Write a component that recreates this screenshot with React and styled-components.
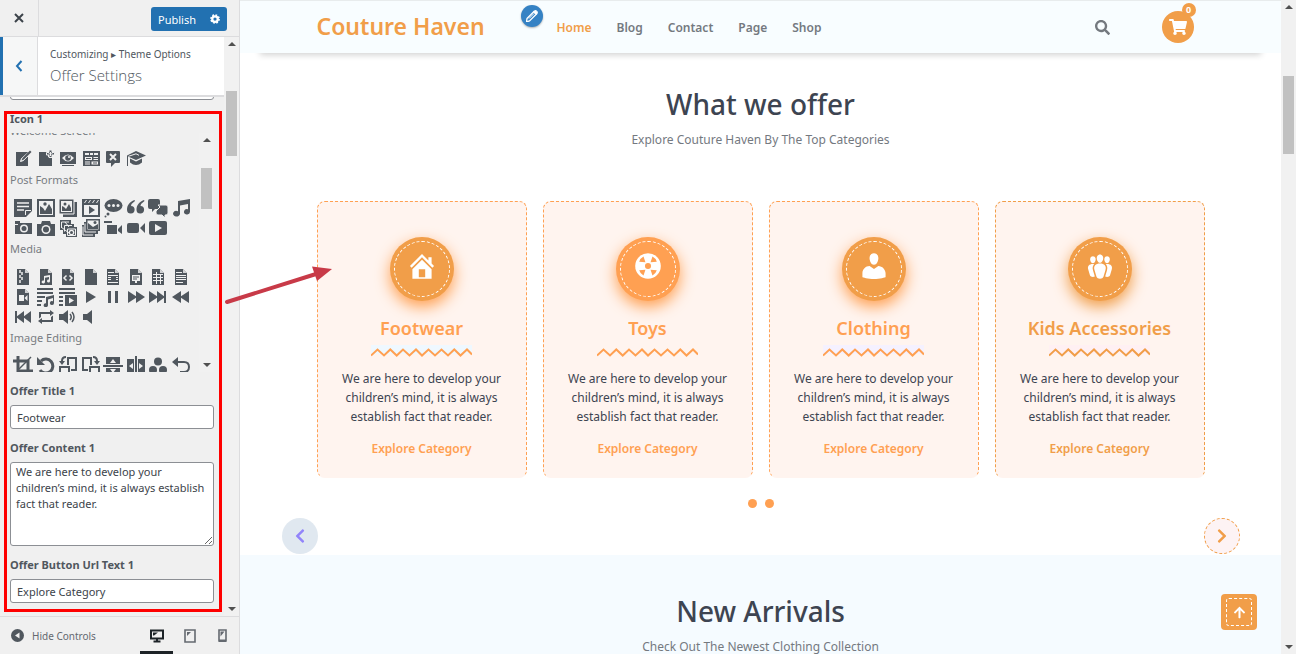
import styled, { createGlobalStyle } from 'styled-components';
import { FaSearch, FaShoppingCart, FaChevronLeft, FaChevronRight, FaArrowUp } from 'react-icons/fa';

const cut = '#f0f0f0';
const file = 'M4 2h8l4 4v12H4z';
const fold = <path d="M12 2v4h4z" fill={cut} opacity="0.8" />;

const icons = {
  write: (
    <>
      <path d="M3 3h12v14H3z" />
      <path d="M17.500 1.500 8.500 9.500 7.500 12.500 10.500 11.500 19 3z" fill={cut} stroke={cut} strokeWidth="1" />
      <path d="M17 1.500 18.500 3 11 10.500 8.500 11.500 9.500 9z" />
    </>
  ),
  addPage: (
    <>
      <path d="M3 3h9v5h4v9H3z" />
      <path d="M13 1h3v2.500h2.500V6H16v2.500h-3V6h-2.500V3.500H13z" stroke={cut} />
      <path d="M14.500 3v4M12.500 4.800h4" stroke={cut} strokeWidth="1" />
    </>
  ),
  viewSite: (
    <>
      <path d="M2 3h16v12H2zM4 16h12v1H4z" />
      <path d="M4 9q6-7 12 0-6 7-12 0z" fill={cut} />
      <circle cx="10" cy="9" r="2.800" />
      <circle cx="11" cy="8" r="1" fill={cut} />
    </>
  ),
  widgets: (
    <>
      <path d="M2 2h17v15H2z" />
      <path d="M4 4h4v2H4zM9 4h3v2H9zM13 4h4v2h-4zM4 8h7v3H4zM12.500 8H17v1h-4.500zM12.500 10H17v1h-4.500zM4 12.500h5v1H4zM4 14.500h5v1H4zM10.500 12.500H17v3h-6.500z" fill={cut} />
      <path d="M5 9h5v1H5zM12 13.500h4v1h-4z" />
    </>
  ),
  comments: (
    <>
      <path d="M4 2h12a1 1 0 0 1 1 1v10a1 1 0 0 1-1 1h-4l-4 4v-4H4a1 1 0 0 1-1-1V3a1 1 0 0 1 1-1z" />
      <path d="M7 5l6 6M13 5l-6 6" stroke={cut} strokeWidth="2" />
    </>
  ),
  learn: (
    <>
      <path d="M10 2l10 4.500-10 4.500L2 7.500V17H1V6.500z" />
      <path d="M4 9.500l6 3 6-3v4q-6 5-12 0z" />
      <path d="M2.500 7.300 10 4.800l3 1.500" stroke={cut} fill="none" />
    </>
  ),
  aside: (
    <>
      <path d="M1 1h18v12l-6 6H1z" />
      <path d="M4 5h12M4 8.500h12M4 12h7" stroke={cut} strokeWidth="1.500" />
      <path d="M12.500 17v-4.500H18" stroke={cut} fill="none" />
    </>
  ),
  image: (
    <>
      <path d="M1 1h18v18H1z" />
      <path d="M3 3h14v14H3z" fill={cut} />
      <path d="M4 16V8l3 2 2 3 4-7 3 5v5z" />
      <circle cx="9" cy="6" r="1.700" />
    </>
  ),
  gallery: (
    <>
      <path d="M5 4h14v15H5z" />
      <path d="M1 1h15v15H1z" stroke={cut} />
      <path d="M3 3h11v11H3z" fill={cut} />
      <path d="M4 13V8l2 1 2 2 3-5 2 4v3z" />
      <circle cx="7" cy="6" r="1.500" />
    </>
  ),
  video: (
    <>
      <path d="M1 1h18v18H1z" />
      <path d="M3 7h14v10H3zM3 5l2-3h1L4 5zM7 5l2-3h1L8 5zM11 5l2-3h1l-2 3zM15 5l2-3h1l-2 3z" fill={cut} />
      <path d="M8 8l6 4-6 4z" />
    </>
  ),
  status: (
    <>
      <ellipse cx="10.500" cy="7.500" rx="9" ry="6.500" />
      <circle cx="5" cy="16" r="1.500" />
      <circle cx="2.500" cy="18.500" r="1" />
      <g fill={cut}>
        <circle cx="6" cy="7.500" r="1.500" />
        <circle cx="10.500" cy="7.500" r="1.500" />
        <circle cx="15" cy="7.500" r="1.500" />
      </g>
    </>
  ),
  quote: (
    <>
      <path d="M8.500 2C3.500 4 1 7 1 12a3.800 3.800 0 1 0 4-4q.2-2.500 4-5z" />
      <path d="M18 2c-5 2-7.500 5-7.500 10a3.800 3.800 0 1 0 4-4q.2-2.500 4-5z" />
    </>
  ),
  chat: (
    <>
      <path d="M2 1h8q2 0 2 2v6q0 2-2 2H7l-3 3v-3H2q-2 0-2-2V3q0-2 2-2z" />
      <path d="M10 7h8q2 0 2 2v6q0 2-2 2h-1v3l-3-3h-4q-2 0-2-2v-2l4-4z" stroke={cut} />
    </>
  ),
  audio: <path d="M7 3l12-2v13a3 2.700 0 1 1-2-2.800V6L9 7.500V16a3.500 2.800 0 1 1-2-2.800z" />,
  cameraSmall: (
    <>
      <path d="M2 3h5v2h12v11H2z" />
      <circle cx="11" cy="10.500" r="4" fill={cut} />
      <circle cx="11" cy="10.500" r="2.500" />
      <path d="M2 6h3v1H2z" fill={cut} />
    </>
  ),
  camera: (
    <>
      <path d="M6 3h8l1 3h4v12H1V6h4z" />
      <circle cx="10" cy="11.500" r="4.500" fill={cut} />
      <circle cx="10" cy="11.500" r="3" />
    </>
  ),
  imagesAlt: (
    <>
      <path d="M2 2h11v4h3v3h3v10H8v-3H5v-4H2z" />
      <path d="M3.500 4H11M3.500 4v6M6.500 7.500H14M6.500 7.500v6M9.500 11h8v6.500h-8z" stroke={cut} fill="none" />
      <path d="m7 4 4 5M3 9l8 6" stroke={cut} />
      <circle cx="13.500" cy="14.500" r="2.800" fill={cut} />
      <circle cx="13.500" cy="14.500" r="1.500" />
    </>
  ),
  imagesAlt2: (
    <>
      <path d="M5 1h14v12h-2v3h-3v3H1V7h2V4h2z" />
      <path d="M4 5.500V14h11M2 8.500V17h10" stroke={cut} fill="none" />
      <path d="M6.500 2.500h11v9h-11z" fill={cut} />
      <path d="M7 11V5l5 4 5-3v5z" />
      <circle cx="14" cy="4.500" r="1.500" />
    </>
  ),
  videoAlt: <path d="M1 3h8v2H1zM4 7h10v9H4zM15 11l4-4v9l-4-3z" />,
  videoAlt2: <path d="M3 5h8q2 0 2 2v6q0 2-2 2H3q-2 0-2-2V7q0-2 2-2zM14 10l5-5v10z" />,
  videoAlt3: (
    <>
      <rect x="1" y="3" width="18" height="14" rx="2" />
      <path d="M7 6l7 4-7 4z" fill={cut} />
    </>
  ),
  archive: (
    <>
      <path d={file} />
      {fold}
      <path d="M7 3v3M9 5v3M7 8v3M9 10v3M7 13v3" stroke={cut} strokeWidth="1.500" />
    </>
  ),
  fileAudio: (
    <>
      <path d={file} />
      {fold}
      <path d="M8 9l6-1v6a1.500 1.500 0 1 1-1-1.400V10l-4 .7V15a1.700 1.500 0 1 1-1-1.400z" fill={cut} />
    </>
  ),
  code: (
    <>
      <path d={file} />
      {fold}
      <path d="M8.500 8.500 6 11l2.500 2.500M11.500 8.500 14 11l-2.500 2.500" stroke={cut} strokeWidth="1.500" fill="none" />
    </>
  ),
  file: (
    <>
      <path d={file} />
      {fold}
    </>
  ),
  fileDoc: (
    <>
      <path d={file} />
      {fold}
      <path d="M5 5.500h6M5 8.500h10M5 10.500h3M5 12.500h3M5 15.500h10M13 10.500h2M13 12.500h2" stroke={cut} />
    </>
  ),
  fileSlides: (
    <>
      <path d={file} />
      {fold}
      <path d="M6 8h8v6h-3v2H9v-2H6z" fill={cut} />
      <path d="M7 10h6M7 12h4" stroke="#50575e" />
    </>
  ),
  sheet: (
    <>
      <path d={file} />
      {fold}
      <path d="M5 7.500h10M5 10.500h10M5 13.500h10M8.500 5v12M12.500 7v10" stroke={cut} />
    </>
  ),
  fileText: (
    <>
      <path d={file} />
      {fold}
      <path d="M5 5.500h6M5 8.500h10M5 10.500h10M5 12.500h10M5 15.500h7" stroke={cut} />
    </>
  ),
  fileVideo: (
    <>
      <path d={file} />
      {fold}
      <path d="M6 8h5v6H6zM11.500 11l3-3v6z" fill={cut} />
    </>
  ),
  playlistAudio: <path d="M1 1h16v2H1zM1 5h16v2H1zM1 9h8v2H1zM1 13h5v2H1zM1 17h4v2H1zM10 10l8-2v8a2 2 0 1 1-1-1.700V11l-5 1.500V18a2.200 2 0 1 1-2-1.800z" />,
  playlistVideo: (
    <>
      <path d="M1 1h16v2H1zM1 5h16v2H1zM1 9h4v2H1zM1 13h4v2H1zM1 17h4v2H1zM7 8h12v11H7z" />
      <path d="M11 10.500l5 3-5 3z" fill={cut} />
    </>
  ),
  play: <path d="M5 4l10 6-10 6V4z" />,
  pause: <path d="M5 16V4h3v12H5zm7-12h3v12h-3V4z" />,
  forward: <path d="M2 16V4l8 5.200V4l9 6-9 6v-5.200z" />,
  skipForward: <path d="M1 16V4l8 5.200V4l7 5.200V4h2v12h-2v-5.200L9 16v-5.200z" />,
  back: <path d="M18 4v12l-8-5.200V16l-9-6 9-6v5.200z" />,
  skipBack: <path d="M18 4v12l-7-5.200V16l-7-5.200V16H2V4h2v5.200L11 4v5.200z" />,
  repeat: <path d="M5 7v3l-2 1.500V5h11V3l4 3.010L14 9V7H5zm10 6v-3l2-1.500V15H6v2l-4-3.010L6 11v2h9z" />,
  volumeOn: (
    <>
      <path d="M1 7h4l5-4v14l-5-4H1z" />
      <path d="M12 7q2.500 3 0 6M14 5q4 5 0 10" fill="none" stroke="currentColor" strokeWidth="1.500" />
    </>
  ),
  volumeOff: <path d="M2 7h4l5-4v14l-5-4H2V7z" />,
  crop: (
    <>
      <path d="M5 0v15h15M0 5h15v15" fill="none" stroke="currentColor" strokeWidth="3" />
      <path d="M18 1 6 13" stroke="currentColor" strokeWidth="1.500" />
    </>
  ),
  rotate: (
    <>
      <path d="M5 5a7 7 0 1 1-1 9" fill="none" stroke="currentColor" strokeWidth="3" />
      <path d="M1 1v8h8z" />
    </>
  ),
  rotateLeft: (
    <>
      <path d="M10 9V2h8v12h-5M2 11h9v8H2z" fill="none" stroke="currentColor" strokeWidth="2" />
      <path d="M8 0v2Q5 2 5 5h2l-3 4-3-4h2q0-5 5-5z" />
    </>
  ),
  rotateRight: (
    <>
      <path d="M10 9V2H2v12h5M9 11h9v8H9z" fill="none" stroke="currentColor" strokeWidth="2" />
      <path d="M12 0v2q3 0 3 3h-2l3 4 3-4h-2q0-5-5-5z" />
    </>
  ),
  flipVertical: (
    <>
      <path d="M3 1h14v7H3zM0 9h20v2H0zM3 12h14v7H3z" />
      <path d="M10 3l3 4H7zM10 17l3-4H7z" fill={cut} />
    </>
  ),
  flipHorizontal: (
    <>
      <path d="M1 3h7v14H1zM9 0h2v20H9zM12 3h7v14h-7z" />
      <path d="M3 10l4-3v6zM17 10l-4-3v6z" fill={cut} />
    </>
  ),
  filter: (
    <>
      <circle cx="10" cy="5.500" r="4" />
      <circle cx="5" cy="14" r="4" />
      <circle cx="15" cy="14" r="4" />
    </>
  ),
  undo: (
    <>
      <path d="M5 6h8q5 0 5 5t-5 5H9" fill="none" stroke="currentColor" strokeWidth="2" />
      <path d="M7 1v10L1 6z" />
    </>
  ),
};

const iconGroups = [
  { title: 'Welcome Screen', names: ['write', 'addPage', 'viewSite', 'widgets', 'comments', 'learn'] },
  {
    title: 'Post Formats',
    names: [
      'aside', 'image', 'gallery', 'video', 'status', 'quote', 'chat', 'audio',
      'cameraSmall', 'camera', 'imagesAlt', 'imagesAlt2', 'videoAlt', 'videoAlt2', 'videoAlt3',
    ],
  },
  {
    title: 'Media',
    names: [
      'archive', 'fileAudio', 'code', 'file', 'fileDoc', 'fileSlides', 'sheet', 'fileText',
      'fileVideo', 'playlistAudio', 'playlistVideo', 'play', 'pause', 'forward', 'skipForward', 'back',
      'skipBack', 'repeat', 'volumeOn', 'volumeOff',
    ],
  },
  {
    title: 'Image Editing',
    names: ['crop', 'rotate', 'rotateLeft', 'rotateRight', 'flipVertical', 'flipHorizontal', 'filter', 'undo'],
  },
];

const content = 'We are here to develop your children’s mind, it is always establish fact that reader.';

const offers = [
  {
    title: 'Footwear',
    color: '#f19e49',
    accent: '#ffa052',
    tint: '#eff8ff',
    icon: <path d="M16 8.500l1.530 1.530-1.060 1.060L10 4.600l-6.470 6.490-1.060-1.060L10 2.500l4 4v-2h2v4zm-6-2.460l6 5.990V18H4v-5.970zM12 17v-5H8v5h4z" />,
  },
  {
    title: 'Toys',
    color: '#ffa052',
    accent: '#ffa052',
    tint: '#fff4ef',
    icon: (
      <>
        <circle cx="10" cy="10" r="8" />
        <g fill="#ffa052">
          <path d="M8.400 7.600 4.500 7.300Q5.200 5 7.200 4zM11.600 7.600l3.900-.3Q14.800 5 12.800 4zM8.400 12.400l-3.900.3Q5.200 15 7.200 16zM11.600 12.400l3.900.3Q14.800 15 12.800 16z" />
          <circle cx="10" cy="10" r="1.900" />
        </g>
      </>
    ),
  },
  {
    title: 'Clothing',
    color: '#f19e49',
    accent: '#ffa052',
    tint: '#f5f1ff',
    icon: <path d="M10 9.250c-2.270 0-2.730-3.440-2.730-3.440C7 4.020 7.820 2 9.970 2c2.160 0 2.980 2.020 2.710 3.810 0 0-.41 3.440-2.680 3.440zm0 2.570L12.720 10c2.390 0 4.520 2.330 4.520 4.530v2.490s-3.650 1.130-7.240 1.130c-3.650 0-7.240-1.130-7.240-1.130v-2.490c0-2.250 1.940-4.480 4.470-4.480z" />,
  },
  {
    title: 'Kids Accessories',
    color: '#f19e49',
    accent: '#f19e49',
    tint: '#fff0f3',
    icon: <path d="M8.030 4.460c-.29 1.280.55 3.460 1.970 3.460 1.410 0 2.250-2.180 1.960-3.460-.22-.98-1.080-1.630-1.960-1.630-.89 0-1.740.65-1.970 1.630zm-4.130.9c-.25 1.080.47 2.930 1.670 2.930s1.920-1.850 1.670-2.930c-.19-.83-.92-1.390-1.670-1.390s-1.480.56-1.670 1.390zm8.860 0c-.25 1.080.47 2.930 1.660 2.930 1.200 0 1.920-1.850 1.670-2.930-.19-.83-.92-1.390-1.670-1.390-.74 0-1.470.56-1.660 1.390zm-.59 11.430l1.250-4.300C14.200 10 12.710 8.470 10 8.470c-2.720 0-4.210 1.530-3.440 4.020l1.260 4.300C8.050 17.510 9 18 10 18c.98 0 1.940-.49 2.170-1.210zm-6.100-7.630c-.49.67-.96 1.830-.42 3.590l1.120 3.790c-.34.2-.77.31-1.200.31-.85 0-1.650-.41-1.850-1.030l-1.070-3.650c-.65-2.110.61-3.400 2.920-3.400.27 0 .54.02.79.06-.1.1-.2.22-.29.33zm8.350-.39c2.310 0 3.580 1.290 2.920 3.400l-1.070 3.650c-.2.62-1 1.030-1.850 1.030-.43 0-.86-.11-1.200-.31l1.110-3.770c.55-1.780.08-2.940-.42-3.610-.08-.11-.18-.23-.28-.33.25-.04.51-.06.79-.06z" />,
  },
];

const navLinks = ['Home', 'Blog', 'Contact', 'Page', 'Shop'];

function IconPicker() {
  return (
    <Picker>
      <PickerList>
        {iconGroups.map((group) => (
          <div key={group.title}>
            <GroupTitle>{group.title}</GroupTitle>
            <IconGrid>
              {group.names.map((name) => (
                <IconButton key={name} type="button" aria-label={name}>
                  <svg width="20" height="20" viewBox="0 0 20 20" fill="currentColor">
                    {icons[name]}
                  </svg>
                </IconButton>
              ))}
            </IconGrid>
          </div>
        ))}
      </PickerList>
      <ScrollTrack>
        <Arrow />
        <Thumb $top={26} $height={41} />
        <Arrow $down />
      </ScrollTrack>
    </Picker>
  );
}

function Customizer() {
  return (
    <Sidebar>
      <SidebarHeader>
        <CloseButton type="button" aria-label="Close">
          <svg width="10" height="10" viewBox="0 0 10 10">
            <path d="M1 1l8 8M9 1l-8 8" stroke="currentColor" strokeWidth="2" />
          </svg>
        </CloseButton>
        <PublishGroup>
          <PublishButton type="button">Publish</PublishButton>
          <GearButton type="button" aria-label="Publish settings">
            <svg width="10" height="10" viewBox="0 0 20 20">
              <circle cx="10" cy="10" r="5.500" fill="none" stroke="currentColor" strokeWidth="4.500" />
              <circle cx="10" cy="10" r="8" fill="none" stroke="currentColor" strokeWidth="3.500" strokeDasharray="3.400 2.880" />
            </svg>
          </GearButton>
        </PublishGroup>
      </SidebarHeader>
      <SidebarBody>
        <Panel>
          <PanelTitle>
            <BackButton type="button" aria-label="Back">
              <svg width="8" height="12" viewBox="0 0 8 12">
                <path d="M6.500 1 2 6l4.500 5" fill="none" stroke="currentColor" strokeWidth="2" />
              </svg>
            </BackButton>
            <PanelHeading>
              <Crumb>Customizing ▸ Theme Options</Crumb>
              <PanelName>Offer Settings</PanelName>
            </PanelHeading>
          </PanelTitle>
          <Fields>
            <ScrolledField>
              <TextInput aria-label="Offer Url" />
            </ScrolledField>
            <Field>
              <Label as="span">Icon 1</Label>
              <IconPicker />
            </Field>
            <Field>
              <Label htmlFor="offer-title">Offer Title 1</Label>
              <TextInput id="offer-title" defaultValue="Footwear" />
            </Field>
            <Field>
              <Label htmlFor="offer-content">Offer Content 1</Label>
              <TextArea id="offer-content" defaultValue={content} />
            </Field>
            <Field>
              <Label htmlFor="offer-button">Offer Button Url Text 1</Label>
              <TextInput id="offer-button" defaultValue="Explore Category" />
            </Field>
          </Fields>
        </Panel>
        <ScrollTrack>
          <Arrow />
          <Thumb $top={45} $height={65} />
          <Arrow $down />
        </ScrollTrack>
      </SidebarBody>
      <SidebarFooter>
        <HideButton type="button">
          <svg width="13" height="13" viewBox="0 0 13 13">
            <circle cx="6.500" cy="6.500" r="6.500" fill="#50575e" />
            <path d="M8.500 3.500v6l-4.500-3z" fill="#f0f0f0" />
          </svg>
          Hide Controls
        </HideButton>
        <Devices>
          <DeviceButton type="button" aria-label="Desktop" $active>
            <svg width="14" height="14" viewBox="0 0 14 14">
              <path d="M1 1.500h12v8H1zM7 9v3M3.500 12.500h7" fill="none" stroke="currentColor" strokeWidth="2" />
              <path d="M3 3.500h5l-4 3H3z" fill="currentColor" />
            </svg>
          </DeviceButton>
          <DeviceButton type="button" aria-label="Tablet">
            <svg width="12" height="14" viewBox="0 0 12 14">
              <path d="M1 1h10v12H1z" fill="none" stroke="currentColor" strokeWidth="1.600" />
              <path d="M3 3h4L3 7z" fill="currentColor" />
            </svg>
          </DeviceButton>
          <DeviceButton type="button" aria-label="Mobile">
            <svg width="9" height="14" viewBox="0 0 9 14">
              <path d="M1 1h7v11H1z" fill="none" stroke="currentColor" strokeWidth="1.600" />
              <path d="M1 10.500h7V13H1zM2.500 2.500h4l-4 5z" fill="currentColor" />
            </svg>
          </DeviceButton>
        </Devices>
      </SidebarFooter>
      <Highlight />
    </Sidebar>
  );
}

function OfferCard({ offer }) {
  return (
    <Card $accent={offer.accent}>
      <Disc $color={offer.color} $glow={offer.accent}>
        <DiscRing>
          <svg width="32" height="32" viewBox="0 0 20 20" fill="#fff">
            {offer.icon}
          </svg>
        </DiscRing>
      </Disc>
      <CardTitle $color={offer.accent}>{offer.title}</CardTitle>
      <Zigzag width="101" height="12" viewBox="0 0 101 12">
        <rect width="101" height="9" fill={offer.tint} />
        <path
          d="M0 10.500 6.500 4.500 13 10.500 19.300 4.500 25.700 10.500 32 4.500 38.500 10.500 45 4.500 51 10.500 57.500 4.500 64 10.500 70.500 4.500 77 10.500 83.300 4.500 89.500 10.500 96 4.500 101 9.500"
          fill="none"
          stroke={offer.accent}
          strokeWidth="2"
        />
      </Zigzag>
      <CardText>{content}</CardText>
      <CardLink href="#category" $color={offer.accent}>
        Explore Category
      </CardLink>
    </Card>
  );
}

export default function App() {
  return (
    <>
      <GlobalStyle />
      <Page>
        <Customizer />
        <Preview>
          <Header>
            <Container>
              <Logo href="#home">Couture Haven</Logo>
              <EditButton type="button" aria-label="Edit menu">
                <svg width="12" height="12" viewBox="0 0 12 12">
                  <path d="M1 8.500 8 1.500l2.500 2.500-7 7-3 .8z" fill="none" stroke="#fff" strokeWidth="1.300" />
                  <path d="M7.500 2 9.500 0 12 2.500l-2 2zM3 8.500l5-5" fill="#fff" stroke="#fff" />
                </svg>
              </EditButton>
              <Nav>
                {navLinks.map((link) => (
                  <NavLink key={link} href={`#${link}`} $active={link === 'Home'}>
                    {link}
                  </NavLink>
                ))}
              </Nav>
              <SearchButton type="button" aria-label="Search">
                <FaSearch size={15} />
              </SearchButton>
              <CartButton type="button" aria-label="Cart">
                <FaShoppingCart size={18} />
                <Badge>0</Badge>
              </CartButton>
            </Container>
          </Header>
          <OfferSection>
            <Heading>What we offer</Heading>
            <SubHeading>Explore Couture Haven By The Top Categories</SubHeading>
            <Cards>
              {offers.map((offer) => (
                <OfferCard key={offer.title} offer={offer} />
              ))}
            </Cards>
            <Dots>
              <Dot type="button" aria-label="Slide 1" />
              <Dot type="button" aria-label="Slide 2" />
            </Dots>
            <SlideNav>
              <PrevButton type="button" aria-label="Previous">
                <FaChevronLeft size={16} />
              </PrevButton>
              <NextButton type="button" aria-label="Next">
                <FaChevronRight size={16} />
              </NextButton>
            </SlideNav>
          </OfferSection>
          <ArrivalSection>
            <Heading>New Arrivals</Heading>
            <SubHeading>Check Out The Newest Clothing Collection</SubHeading>
          </ArrivalSection>
          <TopButton type="button" aria-label="Back to top">
            <TopRing>
              <FaArrowUp size={13} />
            </TopRing>
          </TopButton>
        </Preview>
        <ScrollTrack>
          <Arrow />
          <Thumb $top={67} $height={78} />
          <Arrow $down />
        </ScrollTrack>
        <Pointer width="108" height="40" viewBox="0 0 108 40">
          <path d="M3 36 92 8" stroke="#c83a48" strokeWidth="4" strokeLinecap="round" />
          <path d="M108 3 88 0.500 93 15z" fill="#c83a48" />
        </Pointer>
      </Page>
    </>
  );
}

const GlobalStyle = createGlobalStyle`
  * {
    box-sizing: border-box;
  }

  body {
    margin: 0;
    color: #3c434a;
    font-family: 'Noto Sans', 'Open Sans', sans-serif;
    font-size: 12px;
  }

  button, input, textarea {
    font: inherit;
    color: inherit;
  }

  button {
    padding: 0;
    border: 0;
    background: none;
  }

  a {
    text-decoration: none;
  }

  svg {
    flex: none;
    display: block;
  }
`;

const Page = styled.div`
  position: relative;
  display: flex;
  height: 100vh;
  overflow: hidden;
  background: #fff;
`;

const Sidebar = styled.aside`
  position: relative;
  display: flex;
  flex-direction: column;
  flex: none;
  width: 240px;
  border-right: 1px solid #dcdcde;
  background: #f0f0f0;
`;

const SidebarHeader = styled.div`
  display: flex;
  justify-content: space-between;
  flex: none;
  height: 37px;
  border-bottom: 1px solid #dcdcde;
`;

const CloseButton = styled.button`
  display: flex;
  align-items: center;
  justify-content: center;
  width: 39px;
  border-right: 1px solid #dcdcde;
`;

const PublishGroup = styled.div`
  display: flex;
  margin: 7px 12px 5px 0;
  color: #fff;
`;

const PublishButton = styled.button`
  width: 52px;
  border-radius: 3px 0 0 3px;
  background: #2271b1;
  font-size: 11px;
`;

const GearButton = styled.button`
  display: flex;
  align-items: center;
  justify-content: center;
  width: 24px;
  border-radius: 0 3px 3px 0;
  background: #2271b1;
`;

const SidebarBody = styled.div`
  display: flex;
  flex: 1;
  min-height: 0;
`;

const Panel = styled.div`
  display: flex;
  flex-direction: column;
  flex: 1;
  min-width: 0;
`;

const PanelTitle = styled.div`
  display: flex;
  flex: none;
  height: 60px;
  border-bottom: 2px solid #dcdcde;
  background: #fff;
`;

const BackButton = styled.button`
  display: flex;
  align-items: center;
  justify-content: center;
  width: 38px;
  padding-right: 3px;
  border-left: 3px solid #2271b1;
  border-right: 1px solid #dcdcde;
  background: #f6f7f7;
  color: #2271b1;
`;

const PanelHeading = styled.div`
  padding: 8px 0 0 12px;
`;

const Crumb = styled.div`
  color: #50575e;
  font-size: 10px;
  line-height: 18px;
`;

const PanelName = styled.h1`
  margin: 0;
  color: #50575e;
  font-family: 'Open Sans', sans-serif;
  font-size: 15px;
  font-weight: 300;
  line-height: 24px;
`;

const Fields = styled.div`
  flex: 1;
  min-height: 0;
  padding: 0 10px;
  overflow: hidden;
`;

const Field = styled.div`
  margin-bottom: 10px;
`;

const ScrolledField = styled(Field)`
  margin-top: -21px;
`;

const Label = styled.label`
  display: block;
  margin-bottom: 5px;
  color: #50575e;
  font-size: 11px;
  font-weight: 700;
  line-height: 18px;
`;

const TextInput = styled.input`
  display: block;
  width: 100%;
  height: 24px;
  padding: 0 6px;
  border: 1px solid #8c8f94;
  border-radius: 3px;
  background: #fff;
  font-size: 11px;
`;

const TextArea = styled.textarea`
  display: block;
  width: 100%;
  height: 84px;
  padding: 1px 5px;
  border: 1px solid #8c8f94;
  border-radius: 3px;
  background: #fff;
  font-size: 11px;
  line-height: 16px;
`;

const Picker = styled.div`
  display: flex;
  height: 239px;
  overflow: hidden;
`;

const PickerList = styled.div`
  flex: 1;
  margin-top: -13px;
`;

const GroupTitle = styled.div`
  margin-bottom: 8px;
  color: #787c82;
  font-size: 11px;
  line-height: 21px;
`;

const IconGrid = styled.div`
  display: grid;
  grid-template-columns: repeat(8, 1fr);
  grid-auto-rows: 20px;
  margin: 0 7px 0 2px;
`;

const IconButton = styled.button`
  display: flex;
  align-items: center;
  justify-content: center;
  color: #50575e;
`;

const ScrollTrack = styled.div`
  display: flex;
  flex-direction: column;
  align-items: center;
  flex: none;
  width: 15px;
  padding: 5px 0;
  background: #f1f1f1;
`;

const Arrow = styled.span`
  border: 4px solid transparent;
  ${({ $down }) => ($down ? 'margin-top: auto; border-top-color: #505050; border-bottom: 0;' : 'border-bottom-color: #505050; border-top: 0;')}
`;

const Thumb = styled.span`
  width: 11px;
  height: ${({ $height }) => $height}px;
  margin-top: ${({ $top }) => $top}px;
  background: #c1c1c1;
`;

const SidebarFooter = styled.div`
  display: flex;
  align-items: stretch;
  justify-content: space-between;
  flex: none;
  height: 38px;
  border-top: 1px solid #dcdcde;
  color: #646970;
`;

const HideButton = styled.button`
  display: flex;
  align-items: center;
  gap: 8px;
  padding-left: 11px;
  font-size: 10px;
`;

const Devices = styled.div`
  display: flex;
`;

const DeviceButton = styled.button`
  display: flex;
  align-items: center;
  justify-content: center;
  width: 33px;
  padding-top: 4px;
  color: ${({ $active }) => ($active ? '#1d2327' : '#646970')};
  border-bottom: 3px solid ${({ $active }) => ($active ? '#1d2327' : 'transparent')};
`;

const Highlight = styled.div`
  position: absolute;
  top: 111px;
  right: 17px;
  bottom: 42px;
  left: 4px;
  border: 3px solid #fe0000;
  pointer-events: none;
`;

const Preview = styled.main`
  position: relative;
  flex: 1;
  min-width: 0;
  overflow: hidden;
  background: #fff;
`;

const Header = styled.header`
  position: relative;
  height: 53px;
  border-top: 1px solid #e8eced;
  background: #f8fdff;
  box-shadow: 0 22px 6px -20px rgba(0, 0, 0, 0.18);
`;

const Container = styled.div`
  display: flex;
  align-items: center;
  max-width: 888px;
  height: 100%;
  margin: 0 auto;
`;

const Logo = styled.a`
  width: 204px;
  padding-bottom: 3px;
  color: #f19e49;
  font-size: 23px;
  font-weight: 600;
  white-space: nowrap;
`;

const EditButton = styled.button`
  display: flex;
  align-items: center;
  justify-content: center;
  width: 22px;
  height: 22px;
  margin-bottom: 22px;
  border-radius: 50%;
  background: #3582c4;
  box-shadow: 0 1px 2px rgba(0, 0, 0, 0.3);
`;

const Nav = styled.nav`
  display: flex;
  gap: 25px;
  margin-left: 14px;
`;

const NavLink = styled.a`
  color: ${({ $active }) => ($active ? '#f19e49' : '#74797f')};
  font-size: 12px;
  font-weight: 600;
`;

const SearchButton = styled.button`
  margin-left: auto;
  color: #74797f;
`;

const CartButton = styled.button`
  position: relative;
  display: flex;
  align-items: center;
  justify-content: center;
  width: 32px;
  height: 32px;
  margin: 0 11px 0 52px;
  border-radius: 50%;
  background: #f19e49;
  color: #fff;
`;

const Badge = styled.span`
  position: absolute;
  top: -8px;
  right: -2px;
  width: 14px;
  height: 14px;
  border-radius: 50%;
  background: #f19e49;
  font-size: 9px;
  font-weight: 700;
  line-height: 14px;
`;

const OfferSection = styled.section`
  max-width: 958px;
  margin: 0 auto;
  padding-top: 31px;
`;

const Heading = styled.h2`
  margin: 0;
  color: #3d4451;
  font-size: 28px;
  font-weight: 500;
  line-height: 40px;
  text-align: center;
`;

const SubHeading = styled.p`
  margin: 6px 0 0;
  color: #74797f;
  font-size: 12px;
  line-height: 20px;
  text-align: center;
`;

const Cards = styled.div`
  display: grid;
  grid-template-columns: repeat(4, 1fr);
  gap: 16px;
  margin: 51px 35px 0;
`;

const Card = styled.article`
  display: flex;
  flex-direction: column;
  align-items: center;
  padding: 35px 16px 19px;
  border: 1px dashed ${({ $accent }) => $accent};
  border-bottom-color: transparent;
  border-radius: 8px;
  background: #fff4ef;
`;

const Disc = styled.div`
  width: 64px;
  height: 64px;
  padding: 4px;
  border-radius: 50%;
  background: ${({ $color }) => $color};
  box-shadow: 0 6px 15px ${({ $glow }) => $glow};
`;

const DiscRing = styled.div`
  display: flex;
  justify-content: center;
  height: 100%;
  padding-top: 8px;
  border: 1px dashed #fff;
  border-radius: 50%;
`;

const CardTitle = styled.h3`
  margin: 14px 0 4px;
  color: ${({ $color }) => $color};
  font-size: 18px;
  font-weight: 600;
  line-height: 26px;
`;

const Zigzag = styled.svg`
  margin-bottom: 12px;
`;

const CardText = styled.p`
  margin: 0;
  color: #3d4451;
  font-size: 12px;
  line-height: 19px;
  text-align: center;
`;

const CardLink = styled.a`
  margin-top: 13px;
  color: ${({ $color }) => $color};
  font-size: 12px;
  font-weight: 600;
  line-height: 19px;
`;

const Dots = styled.div`
  display: flex;
  justify-content: center;
  gap: 8px;
  margin-top: 21px;
`;

const Dot = styled.button`
  width: 9px;
  height: 9px;
  border-radius: 50%;
  background: #ffa052;
`;

const SlideNav = styled.div`
  display: flex;
  justify-content: space-between;
  padding: 10px 0 1px;
`;

const RoundButton = styled.button`
  display: flex;
  align-items: center;
  justify-content: center;
  width: 36px;
  height: 36px;
  border-radius: 50%;
`;

const PrevButton = styled(RoundButton)`
  background: #e0e8f0;
  color: #9284fa;
`;

const NextButton = styled(RoundButton)`
  border: 1px dashed #f19e49;
  background: #fdf3f4;
  color: #f19e49;
`;

const ArrivalSection = styled.section`
  height: 100%;
  padding-top: 36px;
  background: #f5fbff;
`;

const TopButton = styled.button`
  position: absolute;
  right: 24px;
  bottom: 24px;
  width: 36px;
  height: 36px;
  padding: 4px 5px;
  border-radius: 4px;
  background: #f19e49;
  color: #fff;
`;

const TopRing = styled.span`
  display: flex;
  align-items: center;
  justify-content: center;
  height: 100%;
  border: 1px dashed #fff;
  border-radius: 3px;
`;

const Pointer = styled.svg`
  position: absolute;
  top: 266px;
  left: 224px;
`;
